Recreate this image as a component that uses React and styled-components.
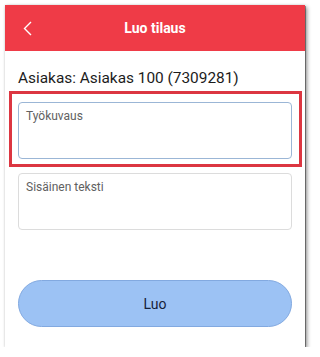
import React, { useState } from 'react'
import styled, { createGlobalStyle } from 'styled-components'

const GlobalStyle = createGlobalStyle`
  html, body {
    margin: 0;
    padding: 0;
    background: #ffffff;
  }
  body {
    font-family: Roboto, "Liberation Sans", Arial, sans-serif;
  }
`

const Page = styled.div`
  padding: 5px 0 0 5px;
`

const Phone = styled.div`
  width: 300px;
  height: 342px;
  background: #fff;
  display: flex;
  flex-direction: column;
  box-shadow: 1px 1px 0 rgba(0, 0, 0, 0.35), 2px 2px 4px rgba(0, 0, 0, 0.45), 0 0 2px rgba(0, 0, 0, 0.12);
`

const Header = styled.div`
  height: 46px;
  background: #ef3b47;
  display: grid;
  grid-template-columns: 46px 1fr 46px;
  align-items: center;
`

const BackButton = styled.button`
  background: none;
  border: none;
  padding: 0 0 0 18px;
  height: 46px;
  display: flex;
  align-items: center;
  cursor: pointer;
`

const Title = styled.h1`
  margin: 0;
  text-align: center;
  color: #fff;
  font-size: 14px;
  font-weight: 700;
`

const Content = styled.div`
  display: flex;
  flex-direction: column;
  padding: 0 13px;
`

const Customer = styled.div`
  margin-top: 17px;
  font-size: 15.4px;
  line-height: 20px;
  color: #1c1c1c;
`

const Highlight = styled.div`
  margin: 3px -10px 0 -9px;
  border: 3px solid #dc3641;
  padding: 8px 7px 5px 6px;
`

const Field = styled.textarea`
  display: block;
  box-sizing: border-box;
  width: 100%;
  height: 57px;
  resize: none;
  border: 1px solid ${p => (p.$focused ? '#9bb6d6' : '#dcdcdc')};
  border-radius: 4px;
  padding: 5px 7px;
  font-family: Roboto, "Liberation Sans", Arial, sans-serif;
  font-size: 12px;
  line-height: 16px;
  color: #333;
  outline: none;
  margin-top: ${p => p.$gap || 0}px;

  &::placeholder {
    color: #616161;
  }
`

const CreateButton = styled.button`
  margin-top: 50px;
  height: 47px;
  border-radius: 24px;
  border: 1px solid #82a9e0;
  background: #9cc2f4;
  color: #16213a;
  font-family: Roboto, "Liberation Sans", Arial, sans-serif;
  font-size: 14px;
  cursor: pointer;
`

const App = () => {
  const [ description, setDescription ] = useState('')
  const [ internal, setInternal ] = useState('')

  return (
    <Page>
      <GlobalStyle />
      <Phone>
        <Header>
          <BackButton aria-label="Takaisin">
            <svg width="9" height="15" viewBox="0 0 9 15" fill="none">
              <path d="M8 1 L1.5 7.5 L8 14" stroke="#fff" strokeWidth="1.4" />
            </svg>
          </BackButton>
          <Title>Luo tilaus</Title>
          <span />
        </Header>
        <Content>
          <Customer>Asiakas: Asiakas 100 (7309281)</Customer>
          <Highlight>
            <Field
              $focused
              placeholder="Työkuvaus"
              value={description}
              onChange={e => setDescription(e.target.value)}
            />
          </Highlight>
          <Field
            $gap={6}
            placeholder="Sisäinen teksti"
            value={internal}
            onChange={e => setInternal(e.target.value)}
          />
          <CreateButton>Luo</CreateButton>
        </Content>
      </Phone>
    </Page>
  )
}

export default App
